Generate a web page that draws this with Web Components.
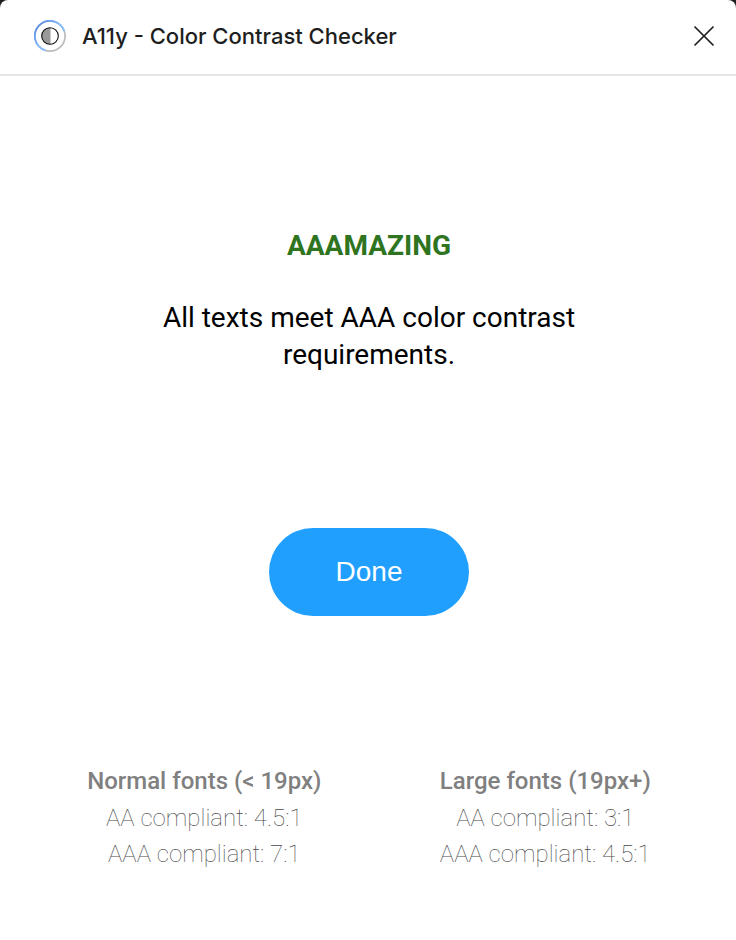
<!DOCTYPE html>
<html lang="en">
<head>
<meta charset="utf-8">
<meta name="viewport" content="width=device-width, initial-scale=1">
<title>A11y - Color Contrast Checker</title>
<style>
  body {
    margin: 0;
    background: #1e1e1e;
    font-family: Roboto, sans-serif;
  }
</style>
</head>
<body>
<plugin-window>
  <plugin-header slot="header">A11y - Color Contrast Checker</plugin-header>
  <check-result>
    <span slot="title">AAAMAZING</span>
    All texts meet AAA color contrast requirements.
  </check-result>
  <pill-button>Done</pill-button>
  <contrast-legend slot="footer">
    <legend-group heading="Normal fonts (&lt; 19px)" aa="4.5:1" aaa="7:1"></legend-group>
    <legend-group heading="Large fonts (19px+)" aa="3:1" aaa="4.5:1"></legend-group>
  </contrast-legend>
</plugin-window>

<script>
class PluginWindow extends HTMLElement {
  shadowRoot = this.attachShadow({ mode: 'open' });

  constructor() {
    super();
    this.shadowRoot.innerHTML = `
      <style>
        :host {
          display: flex;
          flex-direction: column;
          min-height: 100vh;
          background: #fff;
          border-radius: 8px 8px 0 0;
        }

        main {
          flex: 1;
          display: flex;
          flex-direction: column;
          align-items: center;
          gap: 155px;
          padding: 151px 26px 0 28px;
        }
      </style>
      <slot name="header"></slot>
      <main><slot></slot></main>
      <slot name="footer"></slot>
    `;
  }
}

class PluginHeader extends HTMLElement {
  shadowRoot = this.attachShadow({ mode: 'open' });

  constructor() {
    super();
    this.shadowRoot.innerHTML = `
      <style>
        :host {
          display: block;
        }

        header {
          display: flex;
          align-items: center;
          gap: 16px;
          padding: 20px 20px 22px 34px;
          border-bottom: 2px solid #e5e5e5;
        }

        svg {
          display: block;
          flex-shrink: 0;
        }

        h1 {
          flex: 1;
          margin: 0;
          color: #1e1e1e;
          font: 500 22px/32px Inter, sans-serif;
        }

        button {
          padding: 0;
          border: 0;
          background: none;
          cursor: pointer;
        }
      </style>
      <header>
        <svg width="32" height="32" viewBox="0 0 32 32" fill="none" aria-hidden="true">
          <defs>
            <linearGradient id="ring" x1="4" y1="4" x2="23" y2="23" gradientUnits="userSpaceOnUse">
              <stop offset="0" stop-color="#5b8de6"/>
              <stop offset=".6" stop-color="#85bdff"/>
            </linearGradient>
          </defs>
          <circle cx="16" cy="16" r="15.1" stroke="#bcbcbc" stroke-width="1.7"/>
          <path d="M11.5 30.4A15.1 15.1 0 1 1 30.3 11.2" stroke="url(#ring)" stroke-width="1.8"/>
          <path d="M16 7.6a8.4 8.4 0 0 0 0 16.8z" fill="#999"/>
          <path d="M16.5 8v16" stroke="#ccc"/>
          <circle cx="16" cy="16" r="8.3" stroke="#111" stroke-width="1.1"/>
        </svg>
        <h1><slot></slot></h1>
        <button type="button" aria-label="Close">
          <svg width="24" height="24" viewBox="0 0 24 24" fill="none" stroke="#1e1e1e" stroke-width="1.7">
            <path d="M2.5 2.5l19 19M21.5 2.5l-19 19"/>
          </svg>
        </button>
      </header>
    `;
  }
}

class CheckResult extends HTMLElement {
  shadowRoot = this.attachShadow({ mode: 'open' });

  constructor() {
    super();
    this.shadowRoot.innerHTML = `
      <style>
        :host {
          display: block;
          max-width: 440px;
          color: #000;
          font-size: 28px;
          line-height: 37px;
          text-align: center;
        }

        h2 {
          margin: 0 0 35px;
          color: #2f751f;
          font-size: 28px;
          font-weight: 700;
        }

        p {
          margin: 0;
        }
      </style>
      <h2><slot name="title"></slot></h2>
      <p><slot></slot></p>
    `;
  }
}

class PillButton extends HTMLElement {
  shadowRoot = this.attachShadow({ mode: 'open' });

  constructor() {
    super();
    this.shadowRoot.innerHTML = `
      <style>
        :host {
          display: block;
        }

        button {
          display: block;
          min-width: 200px;
          padding: 28px 32px;
          border: 0;
          border-radius: 44px;
          color: #fff;
          background: #209fff;
          font: 28px/32px "Liberation Sans", sans-serif;
          cursor: pointer;
        }
      </style>
      <button type="button"><slot></slot></button>
    `;
  }
}

class ContrastLegend extends HTMLElement {
  shadowRoot = this.attachShadow({ mode: 'open' });

  constructor() {
    super();
    this.shadowRoot.innerHTML = `
      <style>
        :host {
          display: flex;
          justify-content: space-around;
          padding: 0 26px 68px 28px;
        }
      </style>
      <slot></slot>
    `;
  }
}

class LegendGroup extends HTMLElement {
  shadowRoot = this.attachShadow({ mode: 'open' });

  connectedCallback() {
    this.shadowRoot.innerHTML = `
      <style>
        :host {
          display: block;
          font-size: 24px;
          line-height: 36px;
          text-align: center;
        }

        h3 {
          margin: 0 0 1px;
          color: #808080;
          font-size: 24px;
          font-weight: 500;
        }

        /* thin strokes need a darker grey to read like the heading */
        p {
          margin: 0;
          color: #4a4a4a;
          font-weight: 100;
        }
      </style>
      <h3></h3>
      <p>AA compliant: ${this.getAttribute('aa')}</p>
      <p>AAA compliant: ${this.getAttribute('aaa')}</p>
    `;
    this.shadowRoot.querySelector('h3').textContent = this.getAttribute('heading');
  }
}

customElements.define('plugin-window', PluginWindow);
customElements.define('plugin-header', PluginHeader);
customElements.define('check-result', CheckResult);
customElements.define('pill-button', PillButton);
customElements.define('contrast-legend', ContrastLegend);
customElements.define('legend-group', LegendGroup);
</script>
</body>
</html>
